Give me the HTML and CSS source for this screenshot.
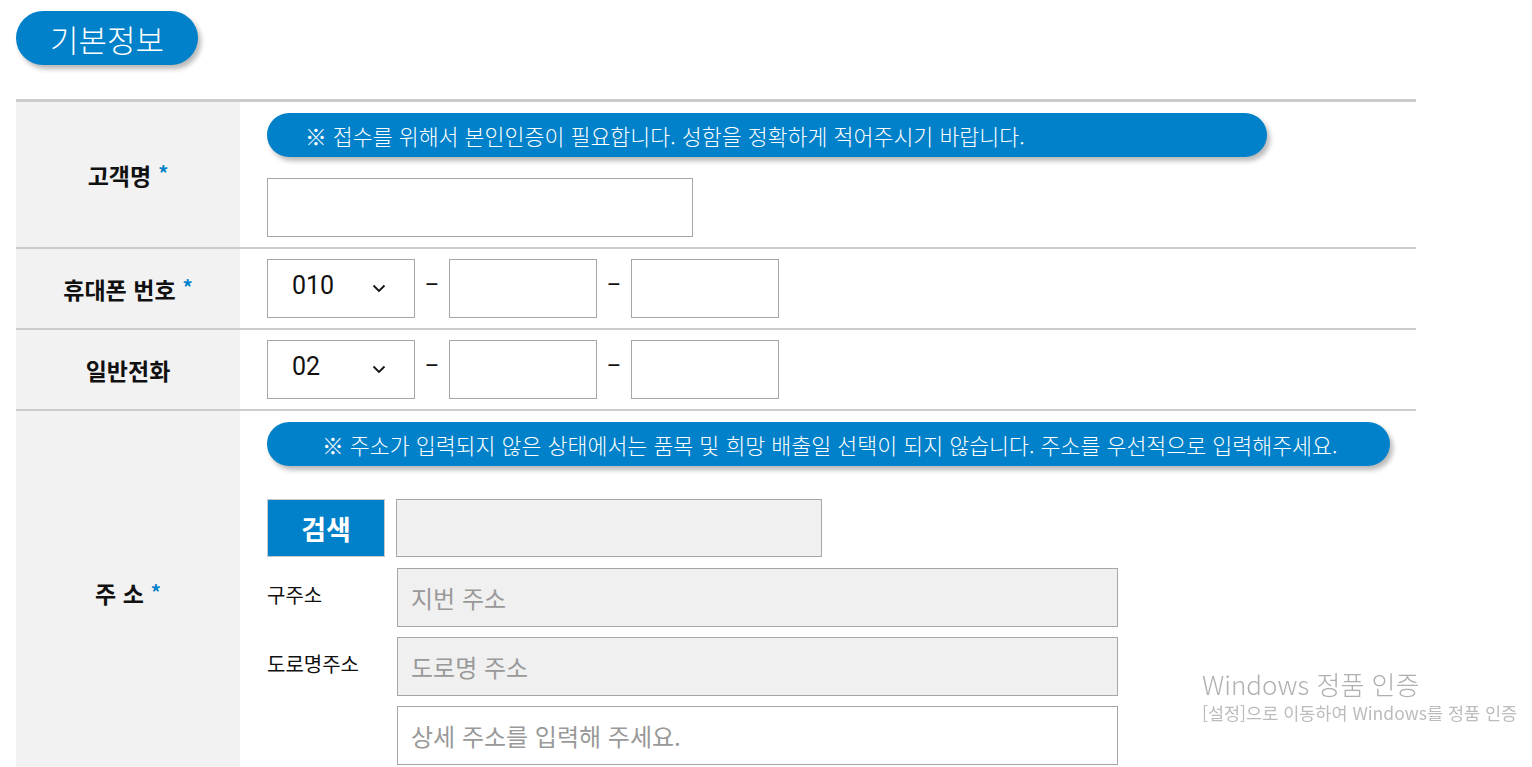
FILE: index.html
```html
<!DOCTYPE html>
<html lang="ko">
<head>
<meta charset="utf-8">
<title>기본정보</title>
<link rel="stylesheet" href="styles.css">
</head>
<body>
<div class="page">
  <h2 class="section-title">기본정보</h2>

  <div class="form-table">
    <div class="row row-name">
      <div class="label">고객명 <span class="req">*</span></div>
      <div class="cell">
        <div class="notice notice-name">※ 접수를 위해서 본인인증이 필요합니다. 성함을 정확하게 적어주시기 바랍니다.</div>
        <input class="field field-name" type="text">
      </div>
    </div>

    <div class="row row-phone">
      <div class="label">휴대폰 번호 <span class="req">*</span></div>
      <div class="cell phone-line">
        <div class="select">
          <span class="select-val">010</span>
          <svg class="chev" width="14" height="9" viewBox="0 0 14 9"><path d="M1.5 1.5 L7 7 L12.5 1.5" fill="none" stroke="#111" stroke-width="1.8"/></svg>
        </div>
        <span class="dash">–</span>
        <input class="field field-phone" type="text">
        <span class="dash">–</span>
        <input class="field field-phone" type="text">
      </div>
    </div>

    <div class="row row-phone">
      <div class="label">일반전화</div>
      <div class="cell phone-line">
        <div class="select">
          <span class="select-val">02</span>
          <svg class="chev" width="14" height="9" viewBox="0 0 14 9"><path d="M1.5 1.5 L7 7 L12.5 1.5" fill="none" stroke="#111" stroke-width="1.8"/></svg>
        </div>
        <span class="dash">–</span>
        <input class="field field-phone" type="text">
        <span class="dash">–</span>
        <input class="field field-phone" type="text">
      </div>
    </div>

    <div class="row row-addr">
      <div class="label">주 소 <span class="req">*</span></div>
      <div class="cell">
        <div class="notice notice-addr">※ 주소가 입력되지 않은 상태에서는 품목 및 희망 배출일 선택이 되지 않습니다. 주소를 우선적으로 입력해주세요.</div>
        <div class="search-line">
          <button class="btn-search" type="button">검색</button>
          <input class="field field-zip" type="text" readonly>
        </div>
        <div class="addr-line">
          <span class="addr-label">구주소</span>
          <input class="field field-addr gray" type="text" placeholder="지번 주소" readonly>
        </div>
        <div class="addr-line">
          <span class="addr-label">도로명주소</span>
          <input class="field field-addr gray" type="text" placeholder="도로명 주소" readonly>
        </div>
        <div class="addr-line">
          <span class="addr-label"></span>
          <input class="field field-addr" type="text" placeholder="상세 주소를 입력해 주세요.">
        </div>
      </div>
    </div>
  </div>
</div>

<div class="watermark">
  <div class="wm-title">Windows 정품 인증</div>
  <div class="wm-sub">[설정]으로 이동하여 Windows를 정품 인증</div>
</div>
</body>
</html>
```

FILE: styles.css
```css
* { box-sizing: border-box; }

html, body {
  margin: 0;
  padding: 0;
  background: #fff;
  overflow: hidden;
}

body {
  font-family: "Noto Sans CJK KR", "Noto Sans", sans-serif;
  color: #111;
}

.page {
  padding: 11px 0 0 16px;
  width: 1416px;
}

.section-title {
  display: inline-flex;
  align-items: center;
  height: 54px;
  margin: 0 0 34px 0;
  padding: 0 34px;
  border-radius: 27px;
  background: #0081c9;
  color: #fff;
  font-size: 31px;
  font-weight: 300;
  letter-spacing: 0;
  box-shadow: 3px 4px 5px rgba(0, 0, 0, 0.28);
}

.form-table {
  width: 1400px;
  border-top: 3px solid #cccccc;
}

.row {
  display: grid;
  grid-template-columns: 224px 1fr;
  border-bottom: 2px solid #cccccc;
}

.label {
  background: #f2f2f2;
  display: flex;
  align-items: center;
  justify-content: center;
  font-size: 23px;
  font-weight: 700;
  color: #111;
}

.req {
  color: #0081c9;
  font-size: 20px;
  font-weight: 700;
  margin-left: 7px;
  transform: translateY(-2px);
}

.cell {
  padding: 11px 0 10px 27px;
  display: flex;
  flex-direction: column;
  align-items: flex-start;
}

.notice {
  height: 44px;
  border-radius: 22px;
  background: #0081c9;
  color: #fff;
  font-size: 21.7px;
  font-weight: 300;
  display: flex;
  align-items: center;
  box-shadow: 3px 4px 5px rgba(0, 0, 0, 0.28);
  white-space: nowrap;
}

.notice-name {
  width: 1000px;
  padding-left: 38px;
  margin-bottom: 21px;
}

.notice-addr {
  padding: 0 53px 0 55px;
  margin-bottom: 33px;
}

.field {
  border: 1px solid #a6a6a6;
  background: #fff;
  height: 59px;
  margin: 0;
  padding: 0 13px;
  font-family: "Noto Sans CJK KR", "Noto Sans", sans-serif;
  font-size: 24px;
  color: #333;
  outline: none;
  border-radius: 0;
}

.field::placeholder {
  color: #999;
}

.field.gray {
  background: #f0f0f0;
}

.field-name {
  width: 426px;
}

.phone-line {
  flex-direction: row;
  align-items: center;
  padding: 10px 0 10px 27px;
}

.select {
  width: 148px;
  height: 59px;
  border: 1px solid #a6a6a6;
  display: flex;
  align-items: center;
  justify-content: space-between;
  padding: 0 28px 0 24px;
  background: #fff;
}

.select-val {
  font-family: Roboto, "Noto Sans", sans-serif;
  font-size: 25px;
  color: #111;
  line-height: 1;
  transform: translateY(-3px);
}

.chev {
  display: block;
  margin-top: 0;
}

.dash {
  width: 34px;
  text-align: center;
  font-family: Roboto, "Noto Sans", sans-serif;
  font-size: 22px;
  color: #111;
  transform: translateY(-4px);
}

.field-phone {
  width: 148px;
}

.search-line {
  display: flex;
  gap: 11px;
  margin-bottom: 11px;
}

.btn-search {
  width: 118px;
  height: 58px;
  border: 1px solid #c8c8c8;
  background: #0081c9;
  color: #fff;
  font-family: "Noto Sans CJK KR", "Noto Sans", sans-serif;
  font-size: 27px;
  font-weight: 700;
  padding: 0;
  margin: 0;
  cursor: pointer;
}

.field-zip {
  width: 426px;
  height: 58px;
  background: #f0f0f0;
}

.addr-line {
  display: flex;
  align-items: center;
  margin-bottom: 10px;
}

.addr-line:last-child {
  margin-bottom: 0;
}

.addr-label {
  width: 130px;
  font-size: 20px;
  color: #111;
  transform: translateY(-3px);
}

.field-addr {
  width: 721px;
}

.watermark {
  position: fixed;
  left: 1202px;
  top: 665px;
  font-family: "Noto Sans CJK KR", "Noto Sans", sans-serif;
  white-space: nowrap;
  pointer-events: none;
}

.wm-title {
  font-size: 26px;
  font-weight: 300;
  line-height: 38px;
  color: #b0b0b0;
}

.wm-sub {
  font-size: 17.5px;
  line-height: 20px;
  color: #bcbcbc;
}
```
